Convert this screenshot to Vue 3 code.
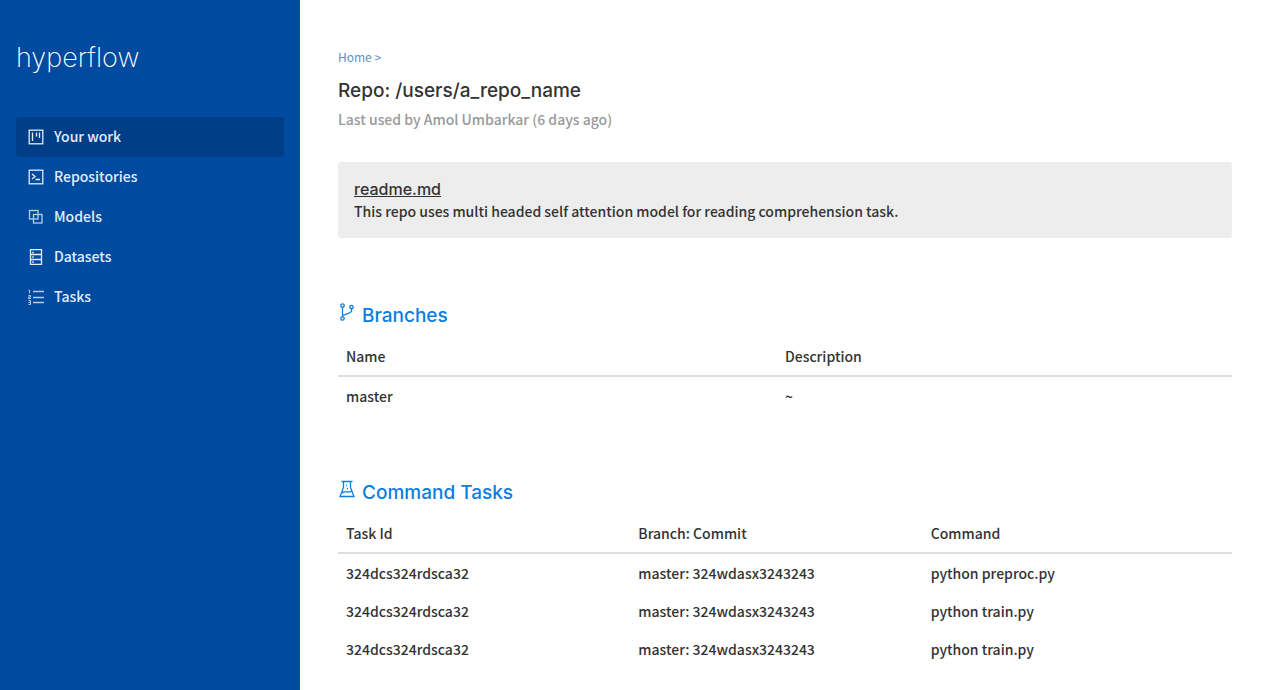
<script setup>
const nav = [
  { id: 'work', label: 'Your work', active: true },
  { id: 'repos', label: 'Repositories' },
  { id: 'models', label: 'Models' },
  { id: 'data', label: 'Datasets' },
  { id: 'tasks', label: 'Tasks' },
]
const branches = [{ name: 'master', description: '~' }]
const tasks = [
  { id: '324dcs324rdsca32', commit: 'master: 324wdasx3243243', command: 'python preproc.py' },
  { id: '324dcs324rdsca32', commit: 'master: 324wdasx3243243', command: 'python train.py' },
  { id: '324dcs324rdsca32', commit: 'master: 324wdasx3243243', command: 'python train.py' },
]
</script>

<template>
  <div class="layout">
    <aside class="sidebar">
      <a class="logo" href="#">hyperflow</a>
      <nav class="nav" aria-label="Main">
        <a v-for="item in nav" :key="item.id" href="#" class="nav-item" :class="{ active: item.active }">
          <svg v-if="item.id === 'work'" class="icon" viewBox="0 0 16 16" aria-hidden="true">
            <rect x="1.2" y="1.2" width="13.6" height="13.6" />
            <path d="M4.500 3.500v8.500M8.500 3.500v4M11.500 3.500v5.500" />
          </svg>
          <svg v-else-if="item.id === 'repos'" class="icon" viewBox="0 0 16 16" aria-hidden="true">
            <rect x="1.2" y="1.2" width="13.6" height="13.6" />
            <path d="M4 5l3 2.500-3 2.500M7.500 10.500h4.500" />
          </svg>
          <svg v-else-if="item.id === 'models'" class="icon soft" viewBox="0 0 16 16" aria-hidden="true">
            <rect x="1.500" y="1.500" width="8.500" height="8.500" />
            <rect x="5.500" y="5.500" width="8.500" height="8.500" />
          </svg>
          <svg v-else-if="item.id === 'data'" class="icon" viewBox="0 0 16 16" aria-hidden="true">
            <path d="M2.500 .6h11v14.900h-11zM2.500 5.500h11M2.500 10.500h11" />
            <path class="soft" d="M4 3.500h2M4 8h2M4 13h2" />
          </svg>
          <svg v-else class="icon soft" viewBox="0 0 16 16" aria-hidden="true">
            <path d="M5 2.500h11M5 8.500h11M5 13.500h11" />
            <path class="digits" d="M.5 1h1v3.500M.5 6.500h2v1.500h-2v1.500h2.500M.5 11.500h2v4h-2M.5 13.500h2" />
          </svg>
          <span>{{ item.label }}</span>
        </a>
      </nav>
    </aside>

    <main class="content">
      <nav class="crumbs" aria-label="Breadcrumb"><a href="#">Home</a> &gt;</nav>
      <h1>Repo: /users/a_repo_name</h1>
      <p class="meta">Last used by Amol Umbarkar (6 days ago)</p>

      <section class="readme">
        <a href="#">readme.md</a>
        <p>This repo uses multi headed self attention model for reading comprehension task.</p>
      </section>

      <section class="block">
        <h2>
          <svg class="icon" viewBox="0 0 18 20" aria-hidden="true">
            <circle cx="4.500" cy="3.500" r="1.700" />
            <circle cx="4.500" cy="16.500" r="1.700" />
            <circle cx="13.500" cy="5" r="1.700" />
            <path d="M4.500 5.200v9.600M13.500 6.700v2.300c0 2-4 2.500-9 4.500" />
          </svg>
          Branches
        </h2>
        <table class="two">
          <thead><tr><th scope="col">Name</th><th scope="col">Description</th></tr></thead>
          <tbody>
            <tr v-for="b in branches" :key="b.name"><td>{{ b.name }}</td><td>{{ b.description }}</td></tr>
          </tbody>
        </table>
      </section>

      <section class="block">
        <h2>
          <svg class="icon" viewBox="0 0 18 20" aria-hidden="true">
            <path d="M3.500 2.500h11M5.500 2.500v6L2 17.500h14l-3.500-9v-6M4 14c3-3 5 1 10-2" />
            <path d="M8 6.500h1M9 9.500h1" />
          </svg>
          Command Tasks
        </h2>
        <table class="three">
          <thead><tr><th scope="col">Task Id</th><th scope="col">Branch: Commit</th><th scope="col">Command</th></tr></thead>
          <tbody>
            <tr v-for="(t, i) in tasks" :key="i"><td>{{ t.id }}</td><td>{{ t.commit }}</td><td>{{ t.command }}</td></tr>
          </tbody>
        </table>
      </section>
    </main>
  </div>
</template>

<style>
body { margin: 0; background: #fff; }
</style>

<style scoped>
.layout {
  display: flex;
  min-height: 100vh;
  font-family: "Noto Sans CJK SC", "Noto Sans", sans-serif;
  font-size: 14px;
  font-weight: 500;
  line-height: 22px;
  color: #333;
}
a { color: inherit; text-decoration: none; }
h1, h2, p { margin: 0; }
.sidebar {
  flex: 0 0 300px;
  box-sizing: border-box;
  padding: 40px 16px;
  background: #004a9f;
  color: #e3edf9;
}
.logo {
  display: block;
  margin-bottom: 41px;
  font: 200 27px/36px Inter, sans-serif;
  color: #fff;
}
.nav-item {
  display: flex;
  align-items: center;
  gap: 10px;
  height: 40px;
  padding: 0 12px;
  border-radius: 4px;
}
.nav-item span { padding-bottom: 2px; }
.nav-item.active { background: #003f87; }
.icon { width: 16px; height: 16px; fill: none; stroke: currentColor; stroke-width: 1.3; }
.soft { opacity: .8; }
.digits { stroke-width: 1; }
.content { flex: 1; min-width: 0; padding: 47px 32px 24px 38px; }
.crumbs { font-size: 12px; font-weight: 400; line-height: 20px; color: #5b93c4; }
h1 { margin-top: 12px; font: 500 19px/24px Inter, sans-serif; }
.meta { margin-top: 5px; color: #999; }
.readme { margin-top: 32px; padding: 16px; border-radius: 3px; background: #ededed; }
.readme a { font: 500 16px/22px Inter, sans-serif; text-decoration: underline; }
.block { margin-top: 62px; }
h2 { display: flex; gap: 6px; font: 500 19px/32px Inter, sans-serif; color: #0b7fdf; }
h2 .icon { width: 18px; height: 20px; margin-top: 2px; }
table { width: 100%; margin-top: 5px; border-collapse: collapse; table-layout: fixed; }
th, td { padding: 8px; text-align: left; font-weight: inherit; }
th { border-bottom: 2px solid #dddde3; }
.two th:first-child { width: 49.1%; }
.three th:not(:last-child) { width: 32.7%; }
.two th, .two td, .three th, .three td { box-sizing: border-box; }
</style>
